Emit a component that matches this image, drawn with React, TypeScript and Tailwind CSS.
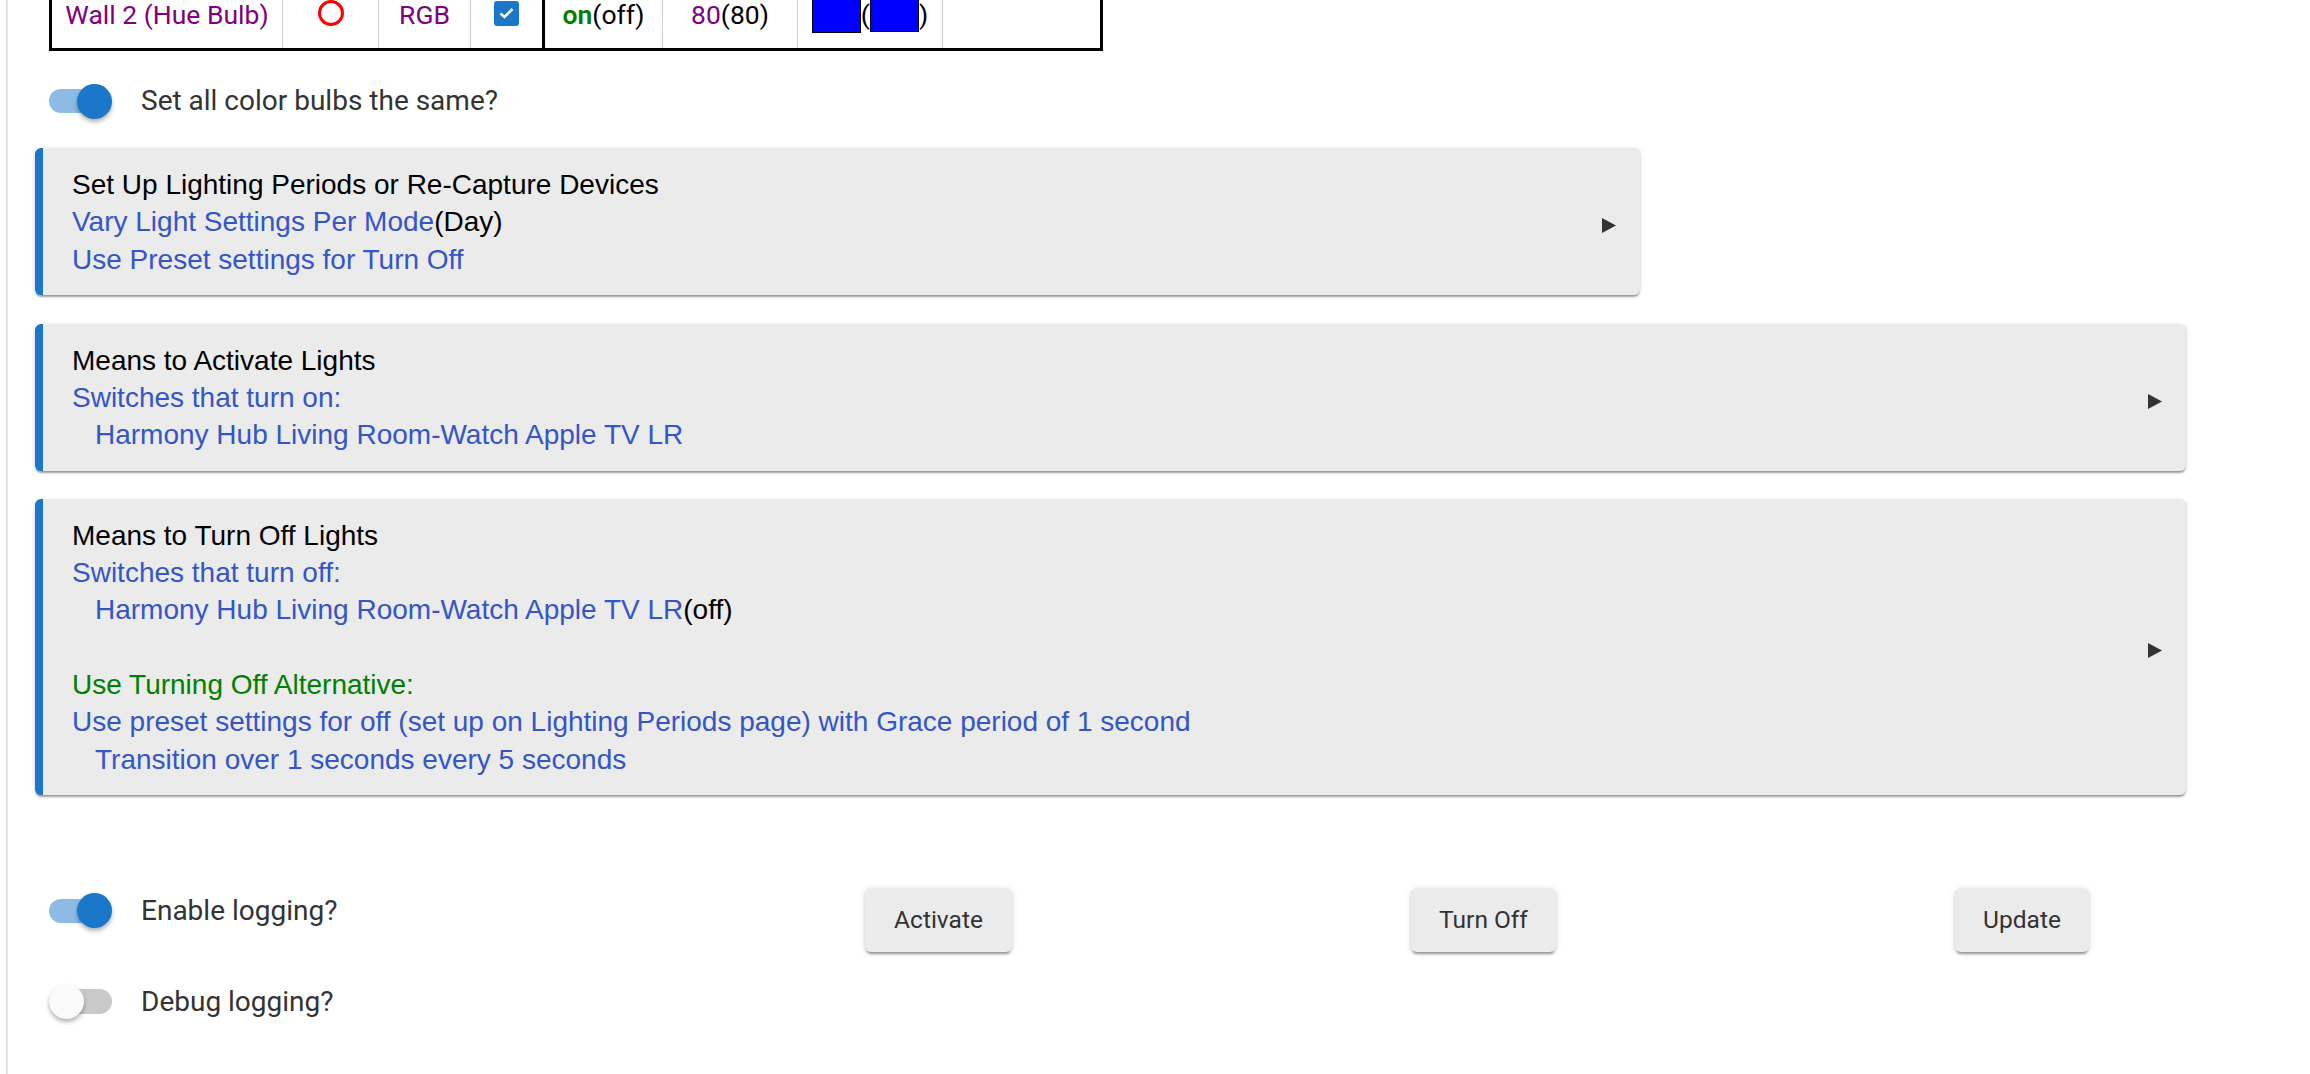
const cardShadow =
  "shadow-[0_3px_2px_-1px_rgba(0,0,0,0.28),0_1px_2px_0_rgba(0,0,0,0.14),0_1px_5px_0_rgba(0,0,0,0.12)]";

const Switch = ({ on }: { on: boolean }) => {
  return (
    <div className="relative flex h-[35px] w-[63px] shrink-0 items-center">
      {on ? (
        <div className="h-[24px] w-[60px] rounded-full bg-[#8dbbe6]" />
      ) : (
        <div className="h-[25px] w-[63px] rounded-full bg-[#c9c9c9]" />
      )}
      {on ? (
        <div className="absolute right-0 top-0 h-[35px] w-[35px] rounded-full bg-[#1a77c9] shadow-[0_3px_4px_rgba(0,0,0,0.3)]" />
      ) : (
        <div className="absolute left-0 top-0 h-[35px] w-[35px] rounded-full bg-[#fafafa] shadow-[0_3px_4px_rgba(0,0,0,0.3)]" />
      )}
    </div>
  );
};

const SwitchRow = ({ on, label }: { on: boolean; label: string }) => {
  return (
    <div className="flex h-[36px] items-center">
      <Switch on={on} />
      <span className="ml-[29px] font-['Roboto',sans-serif] text-[28px] text-[#333]">{label}</span>
    </div>
  );
};

interface CardProps {
  wide?: boolean;
  children: React.ReactNode;
}

const Card = ({ wide = true, children }: CardProps) => {
  return (
    <div
      className={
        (wide ? "w-[2151px] " : "w-[1605px] ") +
        "ml-[27px] flex items-center rounded-[6px] border-l-[8px] border-[#1a77c9] bg-[#ebebeb] " +
        cardShadow
      }
    >
      <div className="flex-1 pb-[17px] pl-[29px] pt-[18px] font-['Liberation_Sans',Arial,sans-serif] text-[28px] leading-[37.3px] text-black">
        {children}
      </div>
      <svg className="mr-[24px] shrink-0 translate-y-[4px]" width="14" height="15" viewBox="0 0 14 15">
        <path d="M0 0L14 7.5L0 15Z" fill="#333" />
      </svg>
    </div>
  );
};

const Blue = ({ children, indent }: { children: React.ReactNode; indent?: boolean }) => (
  <div className={indent ? "pl-[23px] text-[#3456c8]" : "text-[#3456c8]"}>{children}</div>
);

const Button = ({ label, w }: { label: string; w: string }) => (
  <button
    className={
      w +
      " h-[64px] shrink-0 rounded-[6px] bg-[#ebebeb] pt-[2px] font-['Roboto',sans-serif] text-[24.5px] text-[#333] shadow-[0_4px_2px_-2px_rgba(0,0,0,0.25),0_2px_3px_0_rgba(0,0,0,0.14),0_1px_7px_0_rgba(0,0,0,0.12)]"
    }
  >
    {label}
  </button>
);

const Cell = ({ w, children, last }: { w: string; children?: React.ReactNode; last?: boolean }) => (
  <div
    className={
      w +
      " flex h-full items-center justify-center " +
      (last ? "" : "border-r border-[#d0d0d0]")
    }
  >
    {children}
  </div>
);

export default function App() {
  return (
    <div className="h-[1074px] w-[2310px] overflow-hidden bg-white pl-[6px]">
      <div className="flex h-full flex-col items-start border-l-2 border-[#e4e4e4]">
        {/* device table, scrolled so only the last row shows */}
        <div className="-mt-[18px] ml-[41px] flex h-[69px] w-[1054px] shrink-0 border-x-[3px] border-b-[3px] border-black font-['Roboto',sans-serif] text-[26.5px]">
          <Cell w="w-[231px]">
            <span className="text-[#800080]">Wall 2 (Hue Bulb)</span>
          </Cell>
          <Cell w="w-[96px]">
            <span className="-mt-[4px] h-[26px] w-[26px] rounded-full border-[3px] border-[#ff0000]" />
          </Cell>
          <Cell w="w-[92px]">
            <span className="text-[#800080]">RGB</span>
          </Cell>
          <div className="flex h-full w-[74px] items-center justify-center border-r-[3px] border-black">
            <span className="-mt-[4px] flex h-[25px] w-[25px] items-center justify-center rounded-[3px] bg-[#1a77c9]">
              <svg width="15" height="12" viewBox="0 0 15 12">
                <path d="M1.5 6.5L5.5 10L13.5 2" fill="none" stroke="white" strokeWidth="2.6" />
              </svg>
            </span>
          </div>
          <Cell w="w-[118px]">
            <span className="font-semibold text-[#008000]">on</span>
            <span className="text-black">(off)</span>
          </Cell>
          <Cell w="w-[135px]">
            <span className="text-[#800080]">80</span>
            <span className="text-black">(80)</span>
          </Cell>
          <Cell w="w-[145px]">
            <span className="-mt-[12px] h-[48px] w-[49px] border border-black bg-[#0000ff]" />
            <span className="text-black">(</span>
            <span className="-mt-[14px] h-[48px] w-[49px] border border-black bg-[#0000ff]" />
            <span className="text-black">)</span>
          </Cell>
          <Cell w="w-[157px]" last />
        </div>

        <div className="ml-[41px] mt-[32px]">
          <SwitchRow on label="Set all color bulbs the same?" />
        </div>

        <div className="mt-[29px]">
          <Card wide={false}>
            <div>Set Up Lighting Periods or Re-Capture Devices</div>
            <div>
              <span className="text-[#3456c8]">Vary Light Settings Per Mode</span>(Day)
            </div>
            <Blue>Use Preset settings for Turn Off</Blue>
          </Card>
        </div>

        <div className="mt-[29px]">
          <Card>
            <div>Means to Activate Lights</div>
            <Blue>Switches that turn on:</Blue>
            <Blue indent>Harmony Hub Living Room-Watch Apple TV LR</Blue>
          </Card>
        </div>

        <div className="mt-[28px]">
          <Card>
            <div>Means to Turn Off Lights</div>
            <Blue>Switches that turn off:</Blue>
            <div className="pl-[23px]">
              <span className="text-[#3456c8]">Harmony Hub Living Room-Watch Apple TV LR</span>(off)
            </div>
            <div className="h-[37.3px]" />
            <div className="text-[#008000]">Use Turning Off Alternative:</div>
            <Blue>Use preset settings for off (set up on Lighting Periods page) with Grace period of 1 second</Blue>
            <Blue indent>Transition over 1 seconds every 5 seconds</Blue>
          </Card>
        </div>

        <div className="ml-[41px] mt-[93px] flex items-start">
          <div className="flex w-[816px] flex-col pt-[5px]">
            <SwitchRow on label="Enable logging?" />
            <div className="mt-[55px]">
              <SwitchRow on={false} label="Debug logging?" />
            </div>
          </div>
          <Button label="Activate" w="w-[147px]" />
          <div className="w-[399px] shrink-0" />
          <Button label="Turn Off" w="w-[145px]" />
          <div className="w-[399px] shrink-0" />
          <Button label="Update" w="w-[134px]" />
        </div>
      </div>
    </div>
  );
}
